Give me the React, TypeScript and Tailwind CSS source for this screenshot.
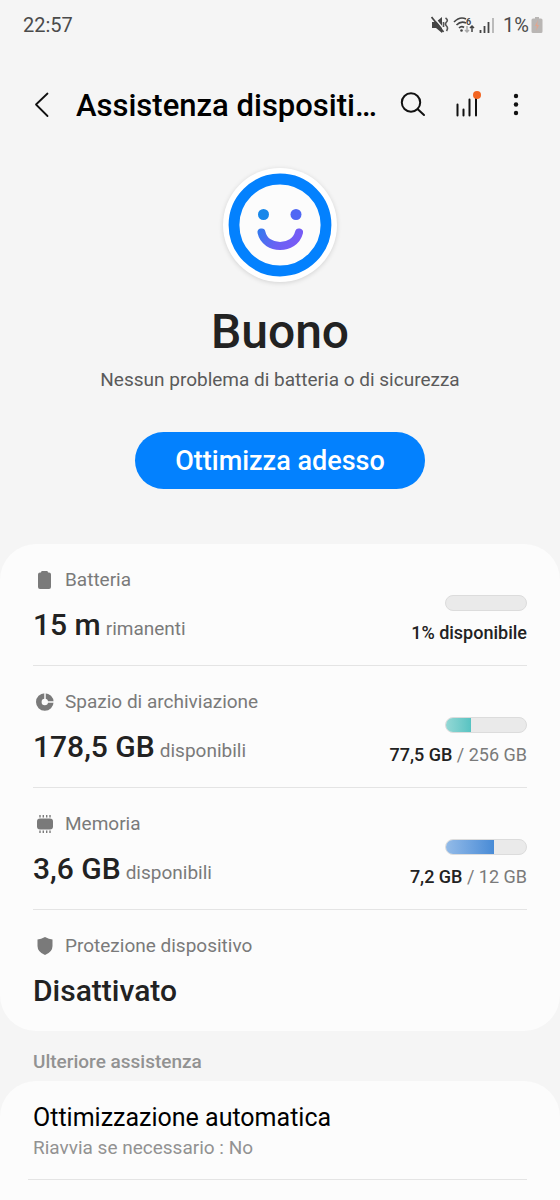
import type { ReactNode } from "react";

function StatusBar() {
  return (
    <div className="flex h-[50px] items-center justify-between pl-[23px] pr-4 text-xl text-[#4b4b4b]">
      <span>22:57</span>
      <div className="flex items-center gap-1">
        <svg width="18" height="20" viewBox="0 0 18 20" aria-hidden="true">
          <path d="M1 7h4l6-5v16l-6-5H1z" fill="#444" />
          <path d="M1.500 0.500l12 14.500" stroke="#f5f5f5" strokeWidth="1.500" />
          <path d="M0.500 2l12 15" stroke="#444" strokeWidth="1.800" />
          <path d="M14.500 3q3 2 1 4t0 4 0 5M12.500 7v5" fill="none" stroke="#555" strokeWidth="1.600" />
        </svg>
        <svg width="22" height="20" viewBox="0 0 22 20" aria-hidden="true">
          <g fill="none" stroke="#444" strokeWidth="1.7">
            <path d="M1 7Q7 1 13 4" />
            <path d="M3.500 10Q8 5.500 13 8" />
            <path d="M6 13Q8.500 10.500 11 12.500" />
          </g>
          <circle cx="8.500" cy="15.500" r="1.300" fill="#444" />
          <text x="13" y="10" fontSize="9" fontWeight="700" fill="#444">6</text>
          <path d="M14 11v6m-2-2 2 2 2-2" fill="none" stroke="#aaa" strokeWidth="1.500" />
          <path d="M19 17v-6m-2 2 2-2 2 2" fill="none" stroke="#444" strokeWidth="1.500" />
        </svg>
        <svg width="16" height="18" viewBox="0 0 16 18" aria-hidden="true">
          <path d="M1.500 14v3M5.500 10v7M9.500 6v11" stroke="#444" strokeWidth="1.800" />
          <path d="M14 2v15" stroke="#b5b5b5" strokeWidth="1.800" />
        </svg>
        <div className="flex items-center gap-px pl-1">
          <span>1%</span>
          <svg width="14" height="18" viewBox="0 0 14 18" aria-hidden="true">
            <path d="M5 1h4v1.500h2q1.500 0 1.500 1.500v11.500q0 1.500-1.500 1.500H3q-1.500 0-1.500-1.500V4q0-1.500 1.500-1.500h2z" fill="#b9b6b4" />
            <path d="M8 4 5 10h2l-1 5 3-6H7z" fill="#e3a48c" />
          </svg>
        </div>
      </div>
    </div>
  );
}

function AppBar() {
  return (
    <header className="flex h-[110px] items-center pl-7 pr-[34px]">
      <button aria-label="Indietro" className="flex size-7 items-center justify-center">
        <svg width="18" height="28" viewBox="0 0 18 28" fill="none" stroke="#111" strokeWidth="1.800" strokeLinecap="round" strokeLinejoin="round">
          <path d="M14.500 2.500 3 13.500 14.500 25" />
        </svg>
      </button>
      <h1 className="ml-5 min-w-0 flex-1 truncate pt-0.5 text-[31px] leading-[48px] font-medium text-black">Assistenza dispositi…</h1>
      <div className="ml-4 flex items-center gap-6">
        <button aria-label="Cerca">
          <svg width="30" height="30" viewBox="0 0 30 30" fill="none" stroke="#111" strokeWidth="2" strokeLinecap="round">
            <circle cx="13" cy="12.500" r="9.200" />
            <path d="m19.800 19.200 6.200 5.800" />
          </svg>
        </button>
        <button aria-label="Utilizzo">
          <svg width="30" height="30" viewBox="0 0 30 30" fill="none">
            <path d="M5.500 14.500v11M11.500 19.500v6M17.500 9.500v16M24 6v19.500" stroke="#111" strokeWidth="2" strokeLinecap="round" />
            <circle cx="25" cy="5" r="4" fill="#f26522" />
          </svg>
        </button>
        <button aria-label="Altre opzioni">
          <svg width="20" height="30" viewBox="0 0 20 30" fill="#111">
            <circle cx="10" cy="6" r="2.200" />
            <circle cx="10" cy="14.500" r="2.200" />
            <circle cx="10" cy="23" r="2.200" />
          </svg>
        </button>
      </div>
    </header>
  );
}

function Face() {
  return (
    <div className="flex size-[114px] items-center justify-center rounded-full bg-white shadow-[0_1px_5px_rgba(0,0,0,0.14)]">
      <svg width="104" height="104" viewBox="0 0 104 104" role="img" aria-label="Stato buono">
        <defs>
          <linearGradient id="smile" x1="28" y1="40" x2="76" y2="70" gradientUnits="userSpaceOnUse">
            <stop offset="0" stopColor="#1784ea" />
            <stop offset="0.600" stopColor="#6a62f4" />
            <stop offset="1" stopColor="#7c58f6" />
          </linearGradient>
        </defs>
        <circle cx="52" cy="52" r="46" fill="#fcfcfc" stroke="#0381fe" strokeWidth="10.800" />
        <circle cx="35.500" cy="41.500" r="5.500" fill="#1787ea" />
        <circle cx="68" cy="41.500" r="5.500" fill="#5068f4" />
        <path d="M33.500 59.500C37.500 77.500 66.500 77.500 71 59.500" fill="none" stroke="url(#smile)" strokeWidth="8" strokeLinecap="round" />
      </svg>
    </div>
  );
}

const batteryIcon = (
  <svg width="20" height="20" viewBox="0 0 20 20" fill="#7a7a7a" aria-hidden="true">
    <path d="M7 1h5q1 0 1 1.500h1q2 0 2 2V17q0 2-2 2H5q-2 0-2-2V4.500q0-2 2-2h1Q6 1 7 1z" />
  </svg>
);

const storageIcon = (
  <svg width="20" height="20" viewBox="0 0 20 20" aria-hidden="true">
    <circle cx="9.800" cy="10" r="6" fill="none" stroke="#7a7a7a" strokeWidth="5.600" />
    <path d="M10 0v10h9" fill="none" stroke="#fcfcfc" strokeWidth="1.500" />
  </svg>
);

const memoryIcon = (
  <svg width="20" height="20" viewBox="0 0 20 20" fill="#7a7a7a" aria-hidden="true">
    <rect x="2" y="4.500" width="16" height="11" rx="3" />
    <path d="M5 1v2.500M8.300 1v2.500M11.700 1v2.500M15 1v2.500M5 16.500V19M8.300 16.500V19M11.700 16.500V19M15 16.500V19" stroke="#7a7a7a" strokeWidth="1.400" />
  </svg>
);

const shieldIcon = (
  <svg width="20" height="20" viewBox="0 0 20 20" fill="#7a7a7a" aria-hidden="true">
    <path d="M10 1q4 2.300 7.500 2.500V10q0 6-7.500 9-7.500-3-7.500-9V3.500Q6 3.300 10 1z" />
  </svg>
);

type RowProps = {
  icon: ReactNode;
  label: string;
  value: string;
  unit?: string;
  bar?: { percent: number; fill: string };
  used?: string;
  total?: string;
};

function StatRow({ icon, label, value, unit, bar, used, total }: RowProps) {
  return (
    <li className="flex items-end justify-between border-b border-[#e4e4e4] pt-[22px] pb-5 last:border-b-0">
      <div>
        <div className="flex h-7 items-center gap-2.5 pl-0.5 text-[19px] text-[#7a7a7a]">
          {icon}
          <span>{label}</span>
        </div>
        <p className="mt-[11px] text-3xl leading-10 text-[#7a7a7a]">
          <span className="font-medium text-[#222]">{value}</span>
          {unit && <span className="ml-[5px] text-[19px] leading-none">{unit}</span>}
        </p>
      </div>
      {bar && (
        <div className="flex flex-col items-end gap-2.5 text-lg leading-6 text-[#7a7a7a]">
          <div className="h-4 w-[82px] overflow-hidden rounded-full border border-[#dcdcdc] bg-[#eaeaea]">
            <div className={`h-full ${bar.fill}`} style={{ width: `${bar.percent}%` }} />
          </div>
          <p>
            <span className="font-medium text-[#222]">{used}</span>
            {total && ` / ${total}`}
          </p>
        </div>
      )}
    </li>
  );
}

export default function App() {
  return (
    <div className="flex min-h-screen flex-col bg-[#f5f5f5] font-[Roboto,sans-serif]">
      <StatusBar />
      <AppBar />
      <main className="flex flex-1 flex-col">
        <section className="flex flex-col items-center px-6 pt-2 pb-[55px]">
          <Face />
          <h2 className="mt-6 text-5xl leading-[52px] font-medium text-[#222]">Buono</h2>
          <p className="mt-2 text-[19px] leading-7 text-[#5a5a5a]">Nessun problema di batteria o di sicurezza</p>
          <button className="mt-[38px] h-[57px] rounded-full bg-[#0381fe] px-10 pt-0.5 text-[27px] font-medium text-white">Ottimizza adesso</button>
        </section>
        <ul className="rounded-[36px] bg-[#fcfcfc] px-[33px]">
          <StatRow icon={batteryIcon} label="Batteria" value="15 m" unit="rimanenti" bar={{ percent: 0, fill: "bg-[#eaeaea]" }} used="1% disponibile" />
          <StatRow icon={storageIcon} label="Spazio di archiviazione" value="178,5 GB" unit="disponibili" bar={{ percent: 31, fill: "bg-linear-to-r from-[#93d8d5] to-[#57c3c2]" }} used="77,5 GB" total="256 GB" />
          <StatRow icon={memoryIcon} label="Memoria" value="3,6 GB" unit="disponibili" bar={{ percent: 60, fill: "bg-linear-to-r from-[#93bbe8] to-[#488bd6]" }} used="7,2 GB" total="12 GB" />
          <StatRow icon={shieldIcon} label="Protezione dispositivo" value="Disattivato" />
        </ul>
        <h3 className="px-[33px] pt-[17px] pb-[5px] text-[19px] leading-7 font-medium text-[#929292]">Ulteriore assistenza</h3>
        <section className="flex-1 rounded-t-[36px] bg-[#fcfcfc] pr-[33px] pl-7">
          <a href="#ottimizzazione" className="block border-b border-[#e4e4e4] px-[5px] pt-[19px] pb-[19px]">
            <span className="block text-[25px] leading-9 text-black">Ottimizzazione automatica</span>
            <span className="block text-[19px] leading-6 text-[#929292]">Riavvia se necessario : No</span>
          </a>
        </section>
      </main>
    </div>
  );
}
